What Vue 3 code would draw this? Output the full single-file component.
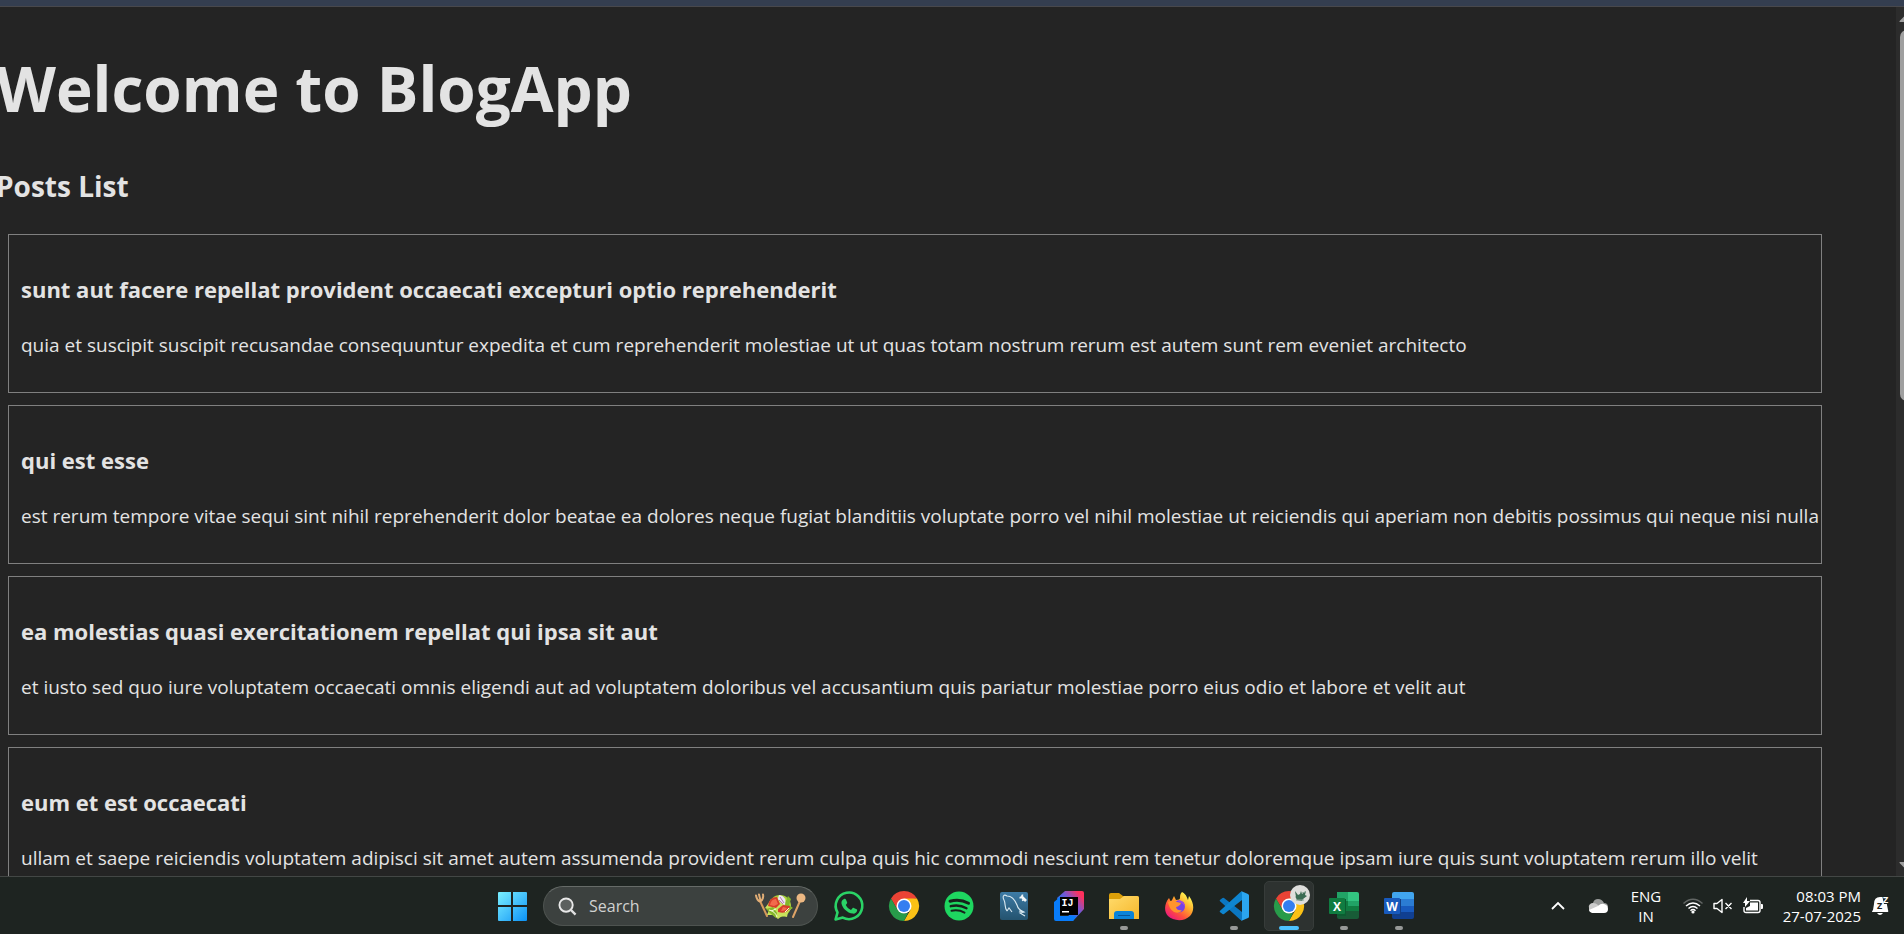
<script setup>
const posts = [
  {
    title: 'sunt aut facere repellat provident occaecati excepturi optio reprehenderit',
    body: 'quia et suscipit suscipit recusandae consequuntur expedita et cum reprehenderit molestiae ut ut quas totam nostrum rerum est autem sunt rem eveniet architecto',
  },
  {
    title: 'qui est esse',
    body: 'est rerum tempore vitae sequi sint nihil reprehenderit dolor beatae ea dolores neque fugiat blanditiis voluptate porro vel nihil molestiae ut reiciendis qui aperiam non debitis possimus qui neque nisi nulla',
  },
  {
    title: 'ea molestias quasi exercitationem repellat qui ipsa sit aut',
    body: 'et iusto sed quo iure voluptatem occaecati omnis eligendi aut ad voluptatem doloribus vel accusantium quis pariatur molestiae porro eius odio et labore et velit aut',
  },
  {
    title: 'eum et est occaecati',
    body: 'ullam et saepe reiciendis voluptatem adipisci sit amet autem assumenda provident rerum culpa quis hic commodi nesciunt rem tenetur doloremque ipsam iure quis sunt voluptatem rerum illo velit',
  },
]
</script>

<template>
  <div class="screen">
    <div class="window-edge"></div>
    <div class="viewport">
      <main class="page">
        <h1>Welcome to BlogApp</h1>
        <h2>Posts List</h2>
        <article v-for="post in posts" :key="post.title" class="post">
          <h3>{{ post.title }}</h3>
          <p>{{ post.body }}</p>
        </article>
      </main>
      <div class="scrollbar" aria-hidden="true">
        <svg class="arrow" viewBox="0 0 16 8"><path d="M1 8Q0 8 .6 7L6.500 .8Q8-.6 9.500 .8L15.400 7Q16 8 15 8z" /></svg>
        <div class="track"><div class="thumb"></div></div>
        <svg class="arrow" viewBox="0 0 16 8"><path d="M1 0Q0 0 .6 1L6.500 7.200Q8 8.600 9.500 7.200L15.400 1Q16 0 15 0z" /></svg>
      </div>
    </div>

    <footer class="taskbar">
      <nav class="apps" aria-label="Taskbar">
        <button class="app" aria-label="Start">
          <svg viewBox="0 0 30 30">
            <defs>
              <linearGradient id="win" x1="0" y1="0" x2="30" y2="30" gradientUnits="userSpaceOnUse">
                <stop offset="0" stop-color="#7df3ff" /><stop offset=".5" stop-color="#48c3fb" /><stop offset="1" stop-color="#0b91f5" />
              </linearGradient>
            </defs>
            <path fill="url(#win)" d="M1 2q0-1 1-1h12v13H1zM16 1h13q1 0 1 1v12H16zM1 16h13v14H2q-1 0-1-1zM16 16h14v13q0 1-1 1H16z" />
          </svg>
        </button>
        <label class="search">
          <svg class="lens" viewBox="0 0 20 20"><circle cx="8.500" cy="8.500" r="7" fill="#5c605e" stroke="#e8e8e8" stroke-width="2" /><path d="M13.500 13.500L18.500 18.500" stroke="#e0e0e0" stroke-width="2.400" /></svg>
          <input type="text" placeholder="Search" aria-label="Search" />
          <svg class="salad" viewBox="0 0 52 28">
            <g stroke-linecap="round" fill="none">
              <path d="M6.500 10L13 24" stroke="#d69a5c" stroke-width="2" />
              <path d="M2 3.500q1 5 4 6q4-2 3-7M5 2.500l1.500 6" stroke="#e0ad76" stroke-width="2" />
              <path d="M46 9L39 25" stroke="#dda367" stroke-width="2" />
            </g>
            <circle cx="47" cy="6" r="4.500" fill="#edb883" />
            <circle cx="26" cy="14" r="11" fill="#a8cf3b" />
            <path fill="#c9e25c" d="M14 12l3-5 5 0 4-4 4 3 5 2-1 4 4 4-4 4-1 5-5-1-4 3-5-4-6 0 2-5-4-2z" />
            <path fill="#84b82b" d="M12 17l7-2 4 6-1 5-5-4zM34 4l3 3-2 6 4 3-4 2-5-5z" />
            <path fill="#d63c2a" d="M14 14q1-9 9-9l3 7-4 4zM24 20q10 3 12-6l-7-1-5 4z" />
            <path fill="#f26a4b" d="M16 13q1-6 6-6l2 5-4 2zM27 19q5 0 6-3l-4-1z" />
            <path fill="#eee5f3" d="M25 3q8 1 6 10l-4-2-3-4z" />
            <path stroke="#b77aab" d="M26 5l4 6M25 8l4 4" />
            <path stroke="#f7fbd8" d="M15 18q6 1 8 7M22 17l-5 2M31 20l4-4" fill="none" />
          </svg>
        </label>

        <button class="app" aria-label="WhatsApp">
          <svg viewBox="0 0 30 30">
            <path fill="none" stroke="#2ad366" stroke-width="2.600" stroke-linejoin="round" d="M1.600 28.400L3.500 21.500A13.300 13.300 0 1 1 8.800 26.600z" />
            <path fill="#2ad366" d="M10 8c.8-.4 1.600-.2 1.900.5l1.200 2.800c.2.500.1.900-.2 1.300l-1.100 1.300c1 2.300 2.800 4 5.200 5l1.500-1.700c.4-.4.800-.5 1.300-.3l2.800 1.400c.6.300.7.800.5 1.500-.5 2-2.300 3.100-4.300 2.800-5.800-1-10.300-5.200-11.300-10.200C7.100 10.500 8.300 8.700 10 8z" />
          </svg>
        </button>
        <button class="app" aria-label="Google Chrome">
          <svg viewBox="0 0 30 30">
            <path fill="#ea4335" d="M2 7.500A15 15 0 0 1 28 7.500L15 9 8.500 18.700z" />
            <path fill="#fbc116" d="M28 7.500A15 15 0 0 1 15 30L21.500 18.700 15 7.500z" />
            <path fill="#289b4a" d="M15 30A15 15 0 0 1 2 7.500L8.500 18.700 15 22.500l4-.5z" />
            <circle cx="15" cy="15" r="7.500" fill="#fff" /><circle cx="15" cy="15" r="6" fill="#347ef0" />
          </svg>
        </button>
        <button class="app" aria-label="Spotify">
          <svg viewBox="0 0 30 30">
            <circle cx="15" cy="15" r="14.500" fill="#1ed760" />
            <path fill="none" stroke="#17221b" stroke-linecap="round" stroke-width="3" d="M6 10.200q10-2.600 18.500 2" />
            <path fill="none" stroke="#17221b" stroke-linecap="round" stroke-width="2.400" d="M6.800 15.200q8.500-2 15.700 2" />
            <path fill="none" stroke="#17221b" stroke-linecap="round" stroke-width="2" d="M7.500 19.800q7-1.500 13 1.800" />
          </svg>
        </button>
        <button class="app" aria-label="MySQL Workbench">
          <svg viewBox="0 0 30 30">
            <defs><linearGradient id="sql" x2="0" y2="1"><stop stop-color="#3d7ba6" /><stop offset="1" stop-color="#24536f" /></linearGradient></defs>
            <rect x="1" y="1" width="28" height="28" rx="2" fill="url(#sql)" />
            <path fill="none" stroke="#d8e8f0" stroke-width="1.100" d="M8 20c-3-4-1-7-3-11s0-6 3-4c5 0 8 4 10 9 1 4 3 5 7 7l-4 1 5 3M8 20l2-3 3 4M25 21l-5-1" />
            <path stroke="#f2f6f8" stroke-width="2.600" d="M22 5l5 5" /><path fill="none" stroke="#f2f6f8" stroke-width="1.600" d="M20.500 6.500q3 1 3-3M25 8.500l-2 1" />
          </svg>
        </button>
        <button class="app" aria-label="IntelliJ IDEA">
          <svg viewBox="0 0 30 30">
            <defs><linearGradient id="ij" x1="4" y1="24" x2="28" y2="3" gradientUnits="userSpaceOnUse"><stop offset=".2" stop-color="#087cfa" /><stop offset=".6" stop-color="#7557d3" /><stop offset=".95" stop-color="#fe315d" /></linearGradient></defs>
            <path fill="url(#ij)" d="M11 0h17q2 0 2 2v16L19 30 5 12 3 7z" />
            <path fill="#087cfa" d="M0 11l6-5v19h16l-3 5H2q-2 0-2-2z" />
            <path fill="#000" d="M6 6h18v18H6z" />
            <text x="7.500" y="15" class="mono">IJ</text><path fill="#fff" d="M8 20h7v1.500H8z" />
          </svg>
        </button>
        <button class="app running" aria-label="File Explorer">
          <svg viewBox="0 0 30 30">
            <defs><linearGradient id="fold" x2="1" y2="1"><stop stop-color="#ffdb6b" /><stop offset="1" stop-color="#f6b72b" /></linearGradient></defs>
            <path fill="#dc9f09" d="M0 4q0-2 2-2h8l4 3h14q2 0 2 2v5H0z" />
            <path fill="url(#fold)" d="M0 8h11l4-3h13q2 0 2 2v21H0z" />
            <path fill="#0a83d8" d="M5 28v-5q0-3 3-3h14q3 0 3 3v5z" /><path stroke="#075599" d="M9 24.500h12" />
          </svg>
        </button>
        <button class="app" aria-label="Firefox">
          <svg viewBox="0 0 30 30">
            <defs><linearGradient id="fox" x1="26" y1="3" x2="6" y2="28" gradientUnits="userSpaceOnUse"><stop offset=".1" stop-color="#fff04d" /><stop offset=".4" stop-color="#ffa62b" /><stop offset=".7" stop-color="#ff4f3d" /><stop offset="1" stop-color="#eb1682" /></linearGradient></defs>
            <path fill="url(#fox)" d="M18 1c5 3 5 6 6 8l1-4c6 8 5 16 1 20-6 6-17 5-22 0-4-4-4-12 1-18l2 4 3-6 2 4c3 0 4-1 4-2 0-2 0-4 2-6z" />
            <circle cx="15" cy="15.500" r="6" fill="#7542e5" />
            <path fill="#a348df" d="M13 9q8 0 8 7-2-4-6-5z" />
            <path fill="#ff942c" d="M4 11q5-3 9 0l4 1q-1 3-5 4 1 4 6 3-2 4-8 2-5-3-6-10z" />
          </svg>
        </button>
        <button class="app running" aria-label="Visual Studio Code">
          <svg viewBox="0 0 30 30">
            <path fill="#0b77c2" d="M1.500 8.500L3.500 7q.8-.5 1.500 0l18 14v8q-1 .5-2-.5L.8 10q-.5-.8.700-1.500z" />
            <path fill="#0e85d0" d="M1.500 21.500L3.500 23q.8.500 1.500 0l18-14V1q-1-.5-2 .5L.8 20q-.5.800.7 1.500z" />
            <path fill="#2ba5ef" d="M22 0l7 3q1 .5 1 1.500v21q0 1-1 1.500l-7 3q1-1 1-3V3q0-2-1-3z" />
          </svg>
        </button>
        <button class="app running active" aria-label="Google Chrome window">
          <svg viewBox="0 0 30 30">
            <path fill="#ea4335" d="M2 7.500A15 15 0 0 1 28 7.500L15 9 8.500 18.700z" />
            <path fill="#fbc116" d="M28 7.500A15 15 0 0 1 15 30L21.500 18.700 15 7.500z" />
            <path fill="#289b4a" d="M15 30A15 15 0 0 1 2 7.500L8.500 18.700 15 22.500l4-.5z" />
            <circle cx="15" cy="15" r="7.500" fill="#fff" /><circle cx="15" cy="15" r="6" fill="#347ef0" />
          </svg>
          <svg class="profile" viewBox="0 0 20 20">
            <circle cx="10" cy="10" r="10" fill="#dededc" />
            <path fill="#3a6b53" d="M5 6l3 4 2-1 1-3 1 3 4-3-1 4 2 1-4 3-1 2-5-1-2-4 1 1z" /><path stroke="#8aa598" d="M6 15h8M12 8l3-1" />
          </svg>
        </button>
        <button class="app running" aria-label="Excel">
          <svg viewBox="0 0 30 30">
            <path fill="#21a366" d="M8 1h11v9H8z" /><path fill="#33c481" d="M19 1h9q2 0 2 2v7H19z" />
            <path fill="#107c41" d="M8 10h11v10H8z" /><path fill="#21a366" d="M19 10h11v5H19z" /><path fill="#107c41" d="M19 15h11v6H19z" />
            <path fill="#185c37" d="M8 20h22v6q0 2-2 2H10q-2 0-2-2z" /><path fill="#0b5d31" d="M8 8h9v17H8z" />
            <rect y="7" width="16" height="16" rx="1" fill="#107c41" /><text x="8" y="19.500" class="letter">X</text>
          </svg>
        </button>
        <button class="app running" aria-label="Word">
          <svg viewBox="0 0 30 30">
            <path fill="#41a5ee" d="M8 8V3q0-2 2-2h18q2 0 2 2v5z" /><path fill="#2b7cd3" d="M8 8h22v7H8z" />
            <path fill="#185abd" d="M8 15h22v6H8z" /><path fill="#103f91" d="M8 21h22v5q0 2-2 2H10q-2 0-2-2z" /><path fill="#143f84" d="M8 8h9v17H8z" />
            <rect y="7" width="16" height="16" rx="1" fill="#185abd" /><text x="8" y="19.500" class="letter">W</text>
          </svg>
        </button>
      </nav>

      <div class="tray">
        <button class="chevron" aria-label="Show hidden icons"><svg viewBox="0 0 14 8"><path fill="none" stroke="#fff" stroke-width="1.800" d="M1 7l6-6 6 6" /></svg></button>
        <button class="cloud" aria-label="OneDrive">
          <svg viewBox="0 0 20 14"><path fill="#9b9d9c" d="M3 11q-4-3-1-6 2-1 3-1 1-4 5-4 4 0 6 4 4 0 4 4-5 5-17 3z" /><path fill="#ccc" d="M1 11Q0 5 5 4q3 0 5 2l3 3-9 4z" /><path fill="#fff" d="M4 14q-3-1-3-3l9-4q3-3 6-2 4 1 4 5t-4 4z" /></svg>
        </button>
        <button class="language"><span>ENG</span><span>IN</span></button>
        <button class="system" aria-label="Network, sound and battery">
          <svg class="wifi" viewBox="0 0 20 16">
            <g fill="none" stroke-width="1.500"><path stroke="#626664" d="M.5 5.500Q10-3 19.500 5.500" /><path stroke="#fff" d="M3 8q7-6 14 0M5.500 10.500q4.500-4 9 0M7.500 12.800q2.500-2.500 5 0" /></g><circle cx="10" cy="14" r="1.600" fill="#fff" />
          </svg>
          <svg class="sound" viewBox="0 0 20 16"><path fill="none" stroke="#fff" stroke-width="1.400" stroke-linejoin="round" d="M1 5.500h3L9 1.500v13L4 10.500H1zM12.500 5l6 6M18.500 5l-6 6" /></svg>
          <svg class="battery" viewBox="0 0 20 18">
            <path fill="none" stroke="#fff" stroke-width="1.400" d="M7 3.500h8q2 0 2 2v8q0 2-2 2H3q-2 0-2-2V10" /><path fill="#fff" d="M7 5.500h8v8H3V11l4-2zM18 7h1q1 0 1 1v3q0 1-1 1h-1zM4 0v4h3L2 10V6H0z" />
          </svg>
        </button>
        <button class="clock"><time>08:03 PM</time><time>27-07-2025</time></button>
        <button class="bell" aria-label="Notifications">
          <svg viewBox="0 0 18 20"><path fill="#fff" d="M8 1Q2 1 2 8l-1 6q-2 2 0 2h14q2 0 1-2l-1-5q0-5-4-8zM5 17h6q-3 4-6 0z" /><text x="5" y="13" class="zed dark">Z</text><path fill="#1e2421" d="M10-1h8v9h-6z" /><text x="11" y="7" class="zed">Z</text></svg>
        </button>
      </div>
    </footer>
  </div>
</template>

<style>
body {
  margin: 0;
  background: #242424;
}
</style>

<style scoped>
.screen {
  display: flex;
  flex-direction: column;
  height: 100vh;
  overflow: hidden;
  background: #242424;
  color: #e3e3e3;
  font-family: "Open Sans", "Noto Sans", sans-serif;
}
.window-edge {
  flex: none;
  height: 6px;
  background: #343e50;
  border-bottom: 1px solid #48484c;
}
.viewport {
  display: flex;
  flex: 1;
  min-height: 0;
  overflow: hidden;
}
.page {
  flex: 1;
  min-width: 0;
  padding-top: 46px;
}
h1, h2, h3, p {
  margin: 0;
  white-space: nowrap;
}
h1 {
  margin-left: -4px;
  font-size: 62px;
  line-height: 70px;
}
h2 {
  margin: 45px 0 30px -4px;
  font-size: 28px;
  line-height: 36px;
}
.post {
  margin: 0 74px 12px 8px;
  padding: 39px 12px 32px;
  border: 1px solid #808080;
}
h3 {
  font-size: 22px;
  line-height: 30px;
}
.post p {
  margin-top: 26px;
  font-size: 19px;
  line-height: 30px;
}
.scrollbar {
  display: flex;
  flex: none;
  flex-direction: column;
  box-sizing: border-box;
  width: 8px;
  padding: 7px 0 6px 3px;
  overflow: hidden;
  background: #2c2c2c;
}
.arrow {
  flex: none;
  width: 16px;
  height: 8px;
  fill: #9f9f9f;
}
.track {
  flex: 1;
  padding: 8px 0 8px 1px;
}
.thumb {
  width: 14px;
  height: 45%;
  border-radius: 7px;
  background: #9f9f9f;
}
.taskbar {
  display: grid;
  flex: none;
  grid-template-columns: 1fr auto 1fr;
  align-items: center;
  height: 57px;
  border-top: 1px solid #434745;
  background: #1e2421;
}
button {
  padding: 0;
  border: 0;
  background: none;
  color: #fff;
  font: inherit;
}
svg {
  display: block;
  overflow: visible;
}
.apps {
  display: flex;
  grid-column: 2;
  align-items: center;
  gap: 5px;
  padding: 1px 0 0 7px;
}
.app {
  position: relative;
  display: flex;
  align-items: center;
  justify-content: center;
  box-sizing: border-box;
  width: 50px;
  height: 50px;
  border: 1px solid transparent;
  border-radius: 5px;
}
.app svg {
  width: 30px;
  height: 30px;
}
.app.active {
  border-color: #373c3a;
  background: #2d3230;
}
.running::after {
  position: absolute;
  bottom: 0;
  left: 50%;
  width: 8px;
  height: 4px;
  margin-left: -4px;
  border-radius: 2px;
  background: #979998;
  content: "";
}
.active::after {
  width: 20px;
  margin-left: -10px;
  background: #4cc2ff;
}
.app .profile {
  position: absolute;
  top: 3px;
  right: 3px;
  width: 20px;
  height: 20px;
}
.search {
  display: flex;
  align-items: center;
  box-sizing: border-box;
  width: 275px;
  height: 40px;
  margin: 0 1px;
  padding: 0 11px 0 14px;
  border: 1px solid #4e5350;
  border-top-color: #666b68;
  border-radius: 20px;
  background: #3c413f;
}
.lens {
  flex: none;
  width: 19px;
  height: 19px;
}
.search input {
  flex: 1;
  min-width: 0;
  padding: 0 0 0 12px;
  border: 0;
  outline: 0;
  background: none;
  color: #fff;
  font: inherit;
  font-size: 16px;
}
.search input::placeholder {
  color: #d0d2d1;
  opacity: 1;
}
.salad {
  flex: none;
  width: 52px;
  height: 28px;
}
.mono {
  fill: #fff;
  font: bold 10px "Liberation Mono", monospace;
}
.letter {
  fill: #fff;
  font: bold 12px "Open Sans", sans-serif;
  text-anchor: middle;
}
.zed {
  fill: #fff;
  font: bold 9px "Open Sans", sans-serif;
}
.dark {
  fill: #1e2421;
}
.tray {
  display: flex;
  grid-column: 3;
  align-items: center;
  justify-content: flex-end;
  padding-right: 14px;
  font-size: 15px;
  line-height: 20px;
}
.chevron svg {
  width: 14px;
  height: 8px;
}
.cloud {
  margin-left: 23px;
}
.cloud svg {
  width: 20px;
  height: 14px;
}
.language {
  display: flex;
  flex-direction: column;
  align-items: center;
  width: 32px;
  margin-left: 22px;
}
.system {
  display: flex;
  align-items: center;
  gap: 10px;
  margin-left: 21px;
}
.wifi, .sound {
  width: 20px;
  height: 16px;
}
.battery {
  width: 20px;
  height: 18px;
}
.clock {
  display: flex;
  flex-direction: column;
  align-items: flex-end;
  width: 80px;
  margin-left: 18px;
}
.bell {
  margin-left: 11px;
}
.bell svg {
  width: 18px;
  height: 20px;
}
</style>
